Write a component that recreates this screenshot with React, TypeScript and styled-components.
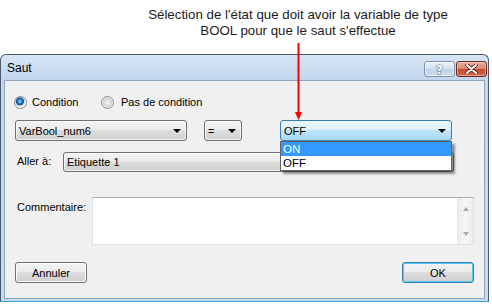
import React from "react";
import styled, { createGlobalStyle, css } from "styled-components";

const GlobalStyle = createGlobalStyle`
  html, body {
    margin: 0;
    padding: 0;
    background: #ffffff;
  }
  body {
    font-family: "Liberation Sans", Arial, sans-serif;
  }
`;

const Page = styled.div`
  position: relative;
  width: 492px;
  height: 304px;
  overflow: hidden;
  display: flex;
  flex-direction: column;
`;

const Callout = styled.div`
  margin: 7px 0 0 146px;
  width: 304px;
  height: 32px;
  text-align: center;
  font-size: 13.3px;
  line-height: 16px;
  color: #1b1b1b;
  white-space: nowrap;
`;

const Pointer = styled.svg`
  position: absolute;
  left: 292px;
  top: 42px;
  z-index: 5;
`;

const Window = styled.div`
  margin-top: 15px;
  width: 489px;
  height: 248px;
  box-sizing: border-box;
  border: 1px solid #4a596d;
  border-bottom-color: #3aa6d0;
  border-radius: 6px 6px 0 0;
  background: linear-gradient(#d7e5f5, #c2d6ee 25px, #c9dbf0);
  display: flex;
  flex-direction: column;
`;

const TitleBar = styled.div`
  height: 25px;
  display: flex;
  justify-content: space-between;
  align-items: flex-start;
`;

const Title = styled.span`
  align-self: center;
  padding-left: 6px;
  font-size: 12px;
  color: #000;
`;

const CaptionButtons = styled.div`
  display: flex;
  gap: 1px;
  margin: 6px 1px 0 0;
`;

const CaptionButton = styled.div<{ $kind: "help" | "close" }>`
  width: 31px;
  height: 16px;
  box-sizing: border-box;
  border-radius: 3px;
  display: flex;
  align-items: center;
  justify-content: center;
  ${(p) =>
    p.$kind === "help"
      ? css`
          border: 1px solid #8092aa;
          background: linear-gradient(#eaf1f9, #d3e0ef 50%, #bdd0e6 50%, #cddef1);
          box-shadow: inset 0 0 0 1px rgba(255, 255, 255, 0.55);
        `
      : css`
          border: 1px solid #6e2a1f;
          background: linear-gradient(#eab0a2, #d8856f 50%, #c3472e 50%, #d26d50);
          box-shadow: inset 0 0 0 1px rgba(255, 220, 210, 0.45);
        `}
`;

const HelpGlyph = styled.span`
  font-family: "DejaVu Sans", sans-serif;
  font-weight: bold;
  font-size: 13px;
  line-height: 13px;
  color: #ffffff;
  -webkit-text-stroke: 1px #5b6878;
  paint-order: stroke fill;
`;

const Body = styled.div`
  flex: 1;
  display: flex;
  padding: 0 3px 2px;
`;

const Content = styled.div`
  flex: 1;
  box-sizing: border-box;
  background: #f0f0f0;
  border: 1px solid #91a5be;
  padding: 14px 10px 0 10px;
  display: flex;
  flex-direction: column;
  font-size: 11px;
  color: #000;
`;

const RadioRow = styled.div`
  display: flex;
  align-items: center;
  height: 14px;
  margin-left: -1px;
`;

const RadioOption = styled.label<{ $width?: number }>`
  display: flex;
  align-items: center;
  gap: ${(p) => (p.$width ? 5 : 7)}px;
  width: ${(p) => (p.$width ? `${p.$width}px` : "auto")};
`;

const RadioDot = styled.span<{ $checked?: boolean }>`
  width: 13px;
  height: 13px;
  box-sizing: border-box;
  border-radius: 50%;
  border: 1px solid #8b8b8b;
  background: ${(p) =>
    p.$checked
      ? "radial-gradient(circle at 45% 40%, #9fe2fb 0, #2a86d3 2px, #0c4f95 3.6px, #c9c9c9 4.3px, #ececec 5px, #fafafa 6px)"
      : "radial-gradient(circle at 50% 50%, #f6f6f6 0, #dcdcdc 3px, #d2d2d2 4.3px, #ececec 5px, #fafafa 6px)"};
`;

const ComboRow = styled.div`
  display: flex;
  margin-top: 11px;
`;

const Combo = styled.div<{ $width: number; $gap?: number; $focused?: boolean; $height?: number }>`
  position: relative;
  box-sizing: border-box;
  width: ${(p) => p.$width}px;
  height: ${(p) => p.$height ?? 21}px;
  margin-left: ${(p) => p.$gap ?? 0}px;
  border-radius: 3px;
  display: flex;
  align-items: center;
  justify-content: space-between;
  padding: 0 5px 0 3px;
  ${(p) =>
    p.$focused
      ? css`
          border: 1px solid #3c7fb1;
          background: linear-gradient(#eaf6fd, #d9f0fc 50%, #bee6fd 50%, #a7d9f5);
        `
      : css`
          border: 1px solid #707070;
          background: linear-gradient(#f2f2f2, #ebebeb 50%, #dddddd 50%, #cfcfcf);
          box-shadow: inset 0 0 0 1px rgba(255, 255, 255, 0.7);
        `}
`;

const ComboText = styled.span`
  white-space: nowrap;
`;

const ComboArrow = styled.span`
  width: 0;
  height: 0;
  border-left: 4px solid transparent;
  border-right: 4px solid transparent;
  border-top: 4px solid #000;
`;

const DropList = styled.ul`
  position: absolute;
  top: 20px;
  left: -1px;
  width: 172px;
  box-sizing: border-box;
  margin: 0;
  padding: 0;
  list-style: none;
  background: #ffffff;
  border: 1px solid #646464;
  box-shadow: 3px 3px 2px rgba(0, 0, 0, 0.4);
  z-index: 3;
`;

const DropItem = styled.li<{ $selected?: boolean }>`
  height: 14px;
  line-height: 14px;
  padding-left: 2px;
  font-size: 11.5px;
  background: ${(p) => (p.$selected ? "#3399ff" : "transparent")};
  color: ${(p) => (p.$selected ? "#ffffff" : "#000000")};
`;

const FieldRow = styled.div<{ $top: number }>`
  display: flex;
  align-items: flex-start;
  margin-top: ${(p) => p.$top}px;
`;

const FieldLabel = styled.span<{ $width: number; $offset: number }>`
  box-sizing: border-box;
  width: ${(p) => p.$width}px;
  padding: ${(p) => p.$offset}px 0 0 2px;
  line-height: 13px;
  white-space: nowrap;
`;

const TextArea = styled.div`
  box-sizing: border-box;
  width: 382px;
  height: 48px;
  background: #ffffff;
  border: 1px solid #dcdfe5;
  border-top-color: #abadb3;
  display: flex;
  justify-content: flex-end;
`;

const ScrollBar = styled.div`
  width: 16px;
  box-sizing: border-box;
  border-left: 1px solid #e9e9e9;
  background: linear-gradient(90deg, #ececec, #f6f6f6 50%, #ececec);
  display: flex;
  flex-direction: column;
  justify-content: space-between;
  align-items: center;
  padding: 9px 0 8px;
`;

const ScrollArrow = styled.span<{ $dir: "up" | "down" }>`
  width: 0;
  height: 0;
  border-left: 3.5px solid transparent;
  border-right: 3.5px solid transparent;
  ${(p) =>
    p.$dir === "up"
      ? "border-bottom: 4px solid #a9a9a9;"
      : "border-top: 4px solid #a9a9a9;"}
`;

const ButtonRow = styled.div`
  display: flex;
  justify-content: space-between;
  margin-top: 17px;
`;

const PushButton = styled.button<{ $default?: boolean }>`
  box-sizing: border-box;
  width: 72px;
  height: 21px;
  padding: 0;
  border-radius: 3px;
  font-family: "Liberation Sans", Arial, sans-serif;
  font-size: 11px;
  color: #000;
  background: linear-gradient(#f2f2f2, #ebebeb 50%, #dddddd 50%, #cfcfcf);
  border: 1px solid ${(p) => (p.$default ? "#3c7fb1" : "#707070")};
  box-shadow: inset 0 0 0 1px ${(p) => (p.$default ? "#55c8f0" : "#fbfbfb")};
`;

export default function App() {
  return (
    <Page>
      <GlobalStyle />
      <Callout>
        Sélection de l'état que doit avoir la variable de type
        <br />
        BOOL pour que le saut s'effectue
      </Callout>
      <Pointer width="13" height="80" viewBox="0 0 13 80">
        <line x1="6.5" y1="1" x2="6.5" y2="72" stroke="#ff0000" strokeWidth="2" />
        <polygon points="3,70 10,70 6.5,78" fill="#ff0000" />
      </Pointer>
      <Window>
        <TitleBar>
          <Title>Saut</Title>
          <CaptionButtons>
            <CaptionButton $kind="help">
              <HelpGlyph>?</HelpGlyph>
            </CaptionButton>
            <CaptionButton $kind="close">
              <svg width="13" height="10" viewBox="0 0 13 10">
                <path
                  d="M2 1 L11 9 M11 1 L2 9"
                  stroke="#5a1a12"
                  strokeWidth="3.6"
                  strokeLinecap="round"
                />
                <path
                  d="M2 1 L11 9 M11 1 L2 9"
                  stroke="#ffffff"
                  strokeWidth="2"
                  strokeLinecap="round"
                />
              </svg>
            </CaptionButton>
          </CaptionButtons>
        </TitleBar>
        <Body>
          <Content>
            <RadioRow>
              <RadioOption $width={87}>
                <RadioDot $checked />
                Condition
              </RadioOption>
              <RadioOption>
                <RadioDot />
                Pas de condition
              </RadioOption>
            </RadioRow>
            <ComboRow>
              <Combo $width={172}>
                <ComboText>VarBool_num6</ComboText>
                <ComboArrow />
              </Combo>
              <Combo $width={38} $gap={17}>
                <ComboText>=</ComboText>
                <ComboArrow />
              </Combo>
              <Combo $width={172} $gap={38} $focused>
                <ComboText>OFF</ComboText>
                <ComboArrow />
                <DropList>
                  <DropItem $selected>ON</DropItem>
                  <DropItem>OFF</DropItem>
                </DropList>
              </Combo>
            </ComboRow>
            <FieldRow $top={11}>
              <FieldLabel $width={48} $offset={3}>
                Aller à:
              </FieldLabel>
              <Combo $width={391} $height={20}>
                <ComboText>Etiquette 1</ComboText>
                <ComboArrow />
              </Combo>
            </FieldRow>
            <FieldRow $top={25}>
              <FieldLabel $width={77} $offset={4}>
                Commentaire:
              </FieldLabel>
              <TextArea>
                <ScrollBar>
                  <ScrollArrow $dir="up" />
                  <ScrollArrow $dir="down" />
                </ScrollBar>
              </TextArea>
            </FieldRow>
            <ButtonRow>
              <PushButton>Annuler</PushButton>
              <PushButton $default>OK</PushButton>
            </ButtonRow>
          </Content>
        </Body>
      </Window>
    </Page>
  );
}
